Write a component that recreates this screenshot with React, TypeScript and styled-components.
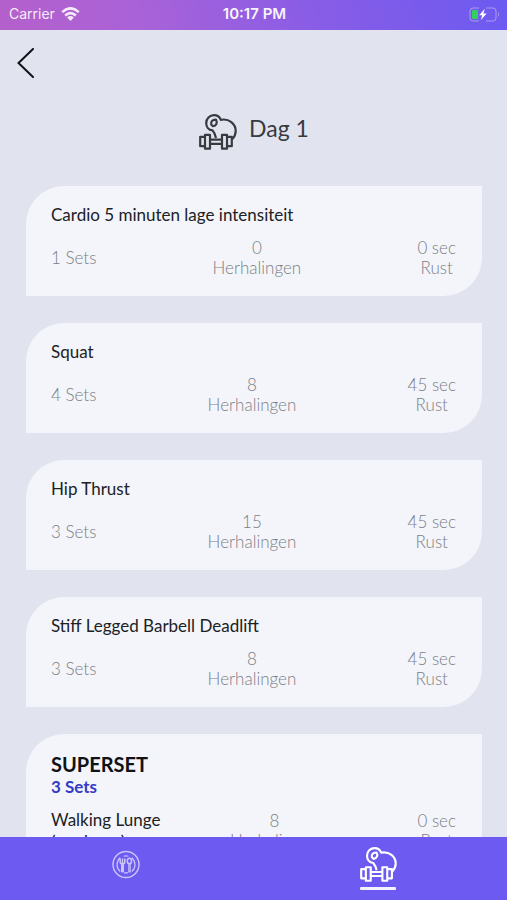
import React from 'react';
import styled, { createGlobalStyle } from 'styled-components';

const GlobalStyle = createGlobalStyle`
  *, *::before, *::after { box-sizing: border-box; }
  body { margin: 0; background: #e1e4ef; font-family: Lato, sans-serif; }
  h1, h2, h3, p, ul { margin: 0; padding: 0; }
`;

const Screen = styled.div`
  display: flex;
  flex-direction: column;
  height: 100vh;
  overflow: hidden;
  color: #202124;
`;

const StatusBar = styled.header`
  flex: none;
  display: grid;
  grid-template-columns: 1fr auto 1fr;
  align-items: center;
  height: 30px;
  padding: 0 7px 2px 9px;
  background: linear-gradient(75deg, #b560cb 0%, #a962d8 28%, #8a5de5 60%, #6c5af1 100%);
  color: #fff;
  font: 400 14px/20px Inter, sans-serif;
`;

const Carrier = styled.div`
  display: flex;
  align-items: center;
  gap: 6px;
  opacity: 0.88;
`;

const Clock = styled.time`
  font-size: 15px;
  font-weight: 600;
  opacity: 0.93;
`;

const BatteryIcon = styled.svg`
  justify-self: end;
`;

const TopBar = styled.div`
  flex: none;
  display: flex;
  height: 66px;
  padding: 13px 12px;
`;

const BackButton = styled.button`
  display: flex;
  align-items: center;
  justify-content: center;
  width: 28px;
  height: 40px;
  padding: 0;
  border: 0;
  background: none;
  color: #111216;
`;

const Content = styled.main`
  flex: 1;
  min-height: 0;
  overflow: hidden;
  padding: 0 25px 0 26px;
`;

const Heading = styled.div`
  display: flex;
  align-items: center;
  justify-content: center;
  gap: 12px;
  height: 90px;
  padding-bottom: 18px;
  color: #383a40;
`;

const DayTitle = styled.h1`
  padding-bottom: 8px;
  font-size: 23px;
  line-height: 30px;
  font-weight: 400;
`;

const ExerciseList = styled.ul`
  display: flex;
  flex-direction: column;
  gap: 27px;
  list-style: none;
`;

const Card = styled.li`
  min-height: 110px;
  padding: 18px 26px 16px 25px;
  border-radius: 38px 0 38px 0;
  background: #f3f5fa;
`;

const ExerciseName = styled.h2`
  font-size: 17px;
  line-height: 22px;
  font-weight: 400;
`;

const StatRow = styled.div`
  display: flex;
  align-items: center;
  justify-content: space-between;
  padding-top: 12px;
`;

const SupersetRow = styled.div`
  display: grid;
  grid-template-columns: 120px auto 1fr;
  column-gap: 59px;
  align-items: center;
  padding-top: 11px;

  & > :last-child { justify-self: end; }
`;

const Stat = styled.p`
  display: flex;
  flex-direction: column;
  align-items: center;
  color: #7c7e85;
  font-size: 17px;
  line-height: 20px;
  font-weight: 300;
`;

const SupersetTitle = styled.h2`
  font-size: 20px;
  line-height: 24px;
  font-weight: 700;
  color: #111216;
`;

const SupersetSets = styled.p`
  font-size: 17px;
  line-height: 22px;
  font-weight: 700;
  color: #343bc6;
`;

const TabBar = styled.nav`
  flex: none;
  display: grid;
  grid-template-columns: 1fr 1fr;
  height: 63px;
  padding-right: 3px;
  background: #6c5af1;
`;

const Tab = styled.button<{ $active?: boolean }>`
  display: flex;
  flex-direction: column;
  align-items: center;
  gap: 5px;
  padding: ${({ $active }) => ($active ? '10px' : '13px')} 0 0;
  border: 0;
  background: none;
  color: ${({ $active }) => ($active ? '#fff' : '#cbc5fb')};
`;

const ActiveLine = styled.span`
  width: 36px;
  height: 3px;
  border-radius: 1px;
  background: #f4f2ff;
`;

function WeightsIcon({ width, height }: { width: number; height: number }) {
  return (
    <svg width={width} height={height} viewBox="0 0 38 36" fill="none" stroke="currentColor" strokeWidth="2.2" strokeLinejoin="round" aria-hidden="true">
      <path d="M17 24 C16.4 21 15.5 18.5 13.6 16.4 C9.5 16 7.2 12.8 7.2 9 C7.2 4.5 10.6 1.2 15 1.2 C18.1 1.2 20.7 3 21.8 5.8 C30 4.3 36.7 9.6 36.7 17 C36.7 20.3 35.4 22.8 33.4 25" />
      <path d="M12.2 10.5 C11.5 7.6 13.5 5.5 17 5.7 C18.8 8.7 17.2 11.8 14 12.2 Z" />
      <path d="M6 22.8 H1.2 V32.2 H6 M6 20.8 H11 V34.7 H6 Z M11 25.7 H23 M11 29.8 H23 M23 20.8 H28 V34.7 H23 Z M28 22.8 H32.8 V32.2 H28" />
    </svg>
  );
}

function WifiIcon() {
  return (
    <svg width="19" height="15" viewBox="0 0 19 15" aria-hidden="true">
      <g fill="none" stroke="#fff" strokeWidth="2.6">
        <path d="M1.2 5.1 Q9.5 -2.5 17.8 5.1" />
        <path d="M4.2 8.5 Q9.5 3.8 14.8 8.5" />
      </g>
      <path d="M6.2 10.5 Q9.5 7.7 12.8 10.5 L9.5 14 Z" fill="#fff" />
    </svg>
  );
}

function Battery() {
  return (
    <BatteryIcon width="31" height="15" viewBox="0 0 31 15" role="img" aria-label="Batterij wordt opgeladen">
      <path d="M10 1 H4 Q1 1 1 4 V11 Q1 14 4 14 H10 M17 1 H24 Q27 1 27 4 V11 Q27 14 24 14 H17" fill="none" stroke="#a99bf4" />
      <path d="M29 5 Q31 7.5 29 10 Z" fill="#a99bf4" />
      <rect x="3" y="3" width="6" height="9" rx="1" fill="#35cf60" />
      <path d="M15.8 1.8 L10.2 8.3 H13.2 L11.7 13.2 L17.6 6.6 H14.4 Z" fill="#fff" />
    </BatteryIcon>
  );
}

function MealIcon() {
  return (
    <svg width="28" height="29" viewBox="0 0 28 29" fill="none" stroke="currentColor" aria-hidden="true">
      <circle cx="14" cy="14.5" r="13" strokeWidth="1.4" />
      <path d="M8.2 7.8 C4 11.5 4 18 8.2 21.5 M19.8 7.8 C24 11.5 24 18 19.8 21.5 M11.6 6.2 Q14 5.4 16.4 6.2 M12 22.8 H16" strokeWidth="1.2" />
      <path d="M8.2 8.5 V12 Q8.2 14 10.5 14 Q12.8 14 12.8 12 V8.5 M10.5 8.5 V22" strokeWidth="1.5" />
      <path d="M9.5 14 V22 H11.5 V14" strokeWidth="1" />
      <ellipse cx="17.4" cy="11" rx="2.1" ry="2.8" strokeWidth="1.5" />
      <path d="M16.8 14 V22 H18.2 V14" strokeWidth="1.1" />
    </svg>
  );
}

interface Exercise {
  name: string;
  sets: number;
  reps: number;
  rest: number;
}

const exercises: Exercise[] = [
  { name: 'Cardio 5 minuten lage intensiteit', sets: 1, reps: 0, rest: 0 },
  { name: 'Squat', sets: 4, reps: 8, rest: 45 },
  { name: 'Hip Thrust', sets: 3, reps: 15, rest: 45 },
  { name: 'Stiff Legged Barbell Deadlift', sets: 3, reps: 8, rest: 45 },
];

function Reps({ count }: { count: number }) {
  return <Stat><span>{count}</span><span>Herhalingen</span></Stat>;
}

function Rest({ seconds }: { seconds: number }) {
  return <Stat><span>{seconds} sec</span><span>Rust</span></Stat>;
}

export default function App() {
  return (
    <Screen>
      <GlobalStyle />
      <StatusBar>
        <Carrier>Carrier <WifiIcon /></Carrier>
        <Clock>10:17 PM</Clock>
        <Battery />
      </StatusBar>
      <TopBar>
        <BackButton type="button" aria-label="Terug">
          <svg width="18" height="30" viewBox="0 0 18 30" fill="none" stroke="currentColor" strokeWidth="2" strokeLinecap="round" aria-hidden="true">
            <path d="M16 1 L1.5 15 L16 29" />
          </svg>
        </BackButton>
      </TopBar>
      <Content>
        <Heading>
          <WeightsIcon width={38} height={36} />
          <DayTitle>Dag 1</DayTitle>
        </Heading>
        <ExerciseList>
          {exercises.map((exercise) => (
            <Card key={exercise.name}>
              <ExerciseName>{exercise.name}</ExerciseName>
              <StatRow>
                <Stat>{exercise.sets} Sets</Stat>
                <Reps count={exercise.reps} />
                <Rest seconds={exercise.rest} />
              </StatRow>
            </Card>
          ))}
          <Card>
            <SupersetTitle>SUPERSET</SupersetTitle>
            <SupersetSets>3 Sets</SupersetSets>
            <SupersetRow>
              <ExerciseName as="h3">Walking Lunge (per been)</ExerciseName>
              <Reps count={8} />
              <Rest seconds={0} />
            </SupersetRow>
          </Card>
        </ExerciseList>
      </Content>
      <TabBar>
        <Tab type="button" aria-label="Voeding"><MealIcon /></Tab>
        <Tab type="button" aria-label="Training" aria-current="page" $active>
          <WeightsIcon width={37} height={35} />
          <ActiveLine />
        </Tab>
      </TabBar>
    </Screen>
  );
}
